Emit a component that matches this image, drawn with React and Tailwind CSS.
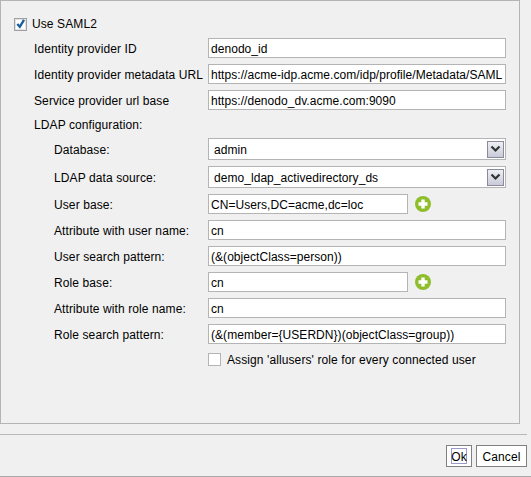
const TextInput = ({ value, className = 'w-[298px]' }) => (
  <div className={`${className} h-[20px] shrink-0 border border-[#b4b4b4] bg-white pl-[2px] pt-[1px] flex items-center text-[12px] tracking-[0.05px] text-black overflow-hidden whitespace-nowrap`}>
    {value}
  </div>
);

const SelectBox = ({ value }) => (
  <div className="w-[298px] h-[22px] shrink-0 border border-[#b4b4b4] bg-white pl-[5px] pr-[1px] flex items-center justify-between text-[12px] tracking-[0.05px] text-black">
    <span className="pt-[1px]">{value}</span>
    <span className="w-[17px] h-[17px] border border-[#8a8a9a] bg-gradient-to-b from-[#eef0f5] to-[#c8cbd8] flex items-center justify-center">
      <svg width="11" height="8" viewBox="0 0 11 8">
        <path d="M1.5 1.5 L5.5 5.5 L9.5 1.5" fill="none" stroke="#333" strokeWidth="2.2" />
      </svg>
    </span>
  </div>
);

const PlusIcon = () => (
  <svg width="16" height="16" viewBox="0 0 16 16" className="ml-[7px]">
    <circle cx="8" cy="8" r="8" fill="#8fbe2c" />
    <path d="M8 3.5 V12.5 M3.5 8 H12.5" stroke="#fff" strokeWidth="3.4" />
  </svg>
);

const Row = ({ label, indent, children }) => (
  <div className="flex items-center">
    <span className={`w-[174px] ${indent ? 'pl-[20px]' : ''} pt-[1px] shrink-0 whitespace-nowrap`}>{label}</span>
    {children}
  </div>
);

export default function App() {
  return (
    <div className="w-[531px] h-[477px] bg-[#f0f0f0] flex flex-col border-b border-[#a8a8a8] text-[12px] tracking-[0.1px] text-black" style={{ fontFamily: '"Liberation Sans", Arial, sans-serif' }}>
      {/* panel */}
      <div className="w-[520px] h-[424px] shrink-0 border border-[#b4b4b4] pl-[13px] pt-[15px] flex flex-col">
        <div className="flex items-center h-[16px] gap-[5px]">
          <span className="w-[13px] h-[13px] border border-[#a0a0a0] bg-white shadow-[inset_0_0_0_1px_#e4e4e4] flex items-center justify-center">
            <svg width="11" height="11" viewBox="0 0 11 11">
              <path d="M2.3 5 L4.8 7.8 L9 0.8" fill="none" stroke="#1c5f9e" strokeWidth="2.4" />
            </svg>
          </span>
          <span>Use SAML2</span>
        </div>
        <div className="mt-[6px] pl-[20px] flex flex-col gap-[6px]">
          <Row label="Identity provider ID"><TextInput value="denodo_id" /></Row>
          <Row label="Identity provider metadata URL"><TextInput value="https://acme-idp.acme.com/idp/profile/Metadata/SAML" /></Row>
          <Row label="Service provider url base"><TextInput value="https://denodo_dv.acme.com:9090" /></Row>
          <div className="h-[16px] pt-[1px] flex items-center">LDAP configuration:</div>
          <Row indent label="Database:"><SelectBox value="admin" /></Row>
          <Row indent label="LDAP data source:"><SelectBox value="demo_ldap_activedirectory_ds" /></Row>
          <Row indent label="User base:"><TextInput value="CN=Users,DC=acme,dc=loc" className="w-[200px]" /><PlusIcon /></Row>
          <Row indent label="Attribute with user name:"><TextInput value="cn" /></Row>
          <Row indent label="User search pattern:"><TextInput value="(&(objectClass=person))" /></Row>
          <Row indent label="Role base:"><TextInput value="cn" className="w-[200px]" /><PlusIcon /></Row>
          <Row indent label="Attribute with role name:"><TextInput value="cn" /></Row>
          <Row indent label="Role search pattern:"><TextInput value="(&(member={USERDN})(objectClass=group))" /></Row>
          <div className="mt-[3px] h-[13px] pl-[174px] flex items-center gap-[6px]">
            <span className="w-[13px] h-[13px] border border-[#b4b4b4] bg-white" />
            <span>Assign 'allusers' role for every connected user</span>
          </div>
        </div>
      </div>
      {/* separator */}
      <div className="mt-[10px] w-[527px] h-[1px] bg-[#b8b8b8]" />
      {/* buttons */}
      <div className="mt-[10px] w-[527px] flex justify-end gap-[4px]">
        <div className="w-[26px] h-[22px] border border-[#808080] bg-white flex items-center justify-center px-[4px] py-[2px]">
          <span className="w-full h-full border border-[#9a9ac8] pt-[1px] flex items-center justify-center">Ok</span>
        </div>
        <div className="w-[51px] h-[22px] border border-[#808080] bg-white pt-[1px] flex items-center justify-center">Cancel</div>
      </div>
    </div>
  );
}
